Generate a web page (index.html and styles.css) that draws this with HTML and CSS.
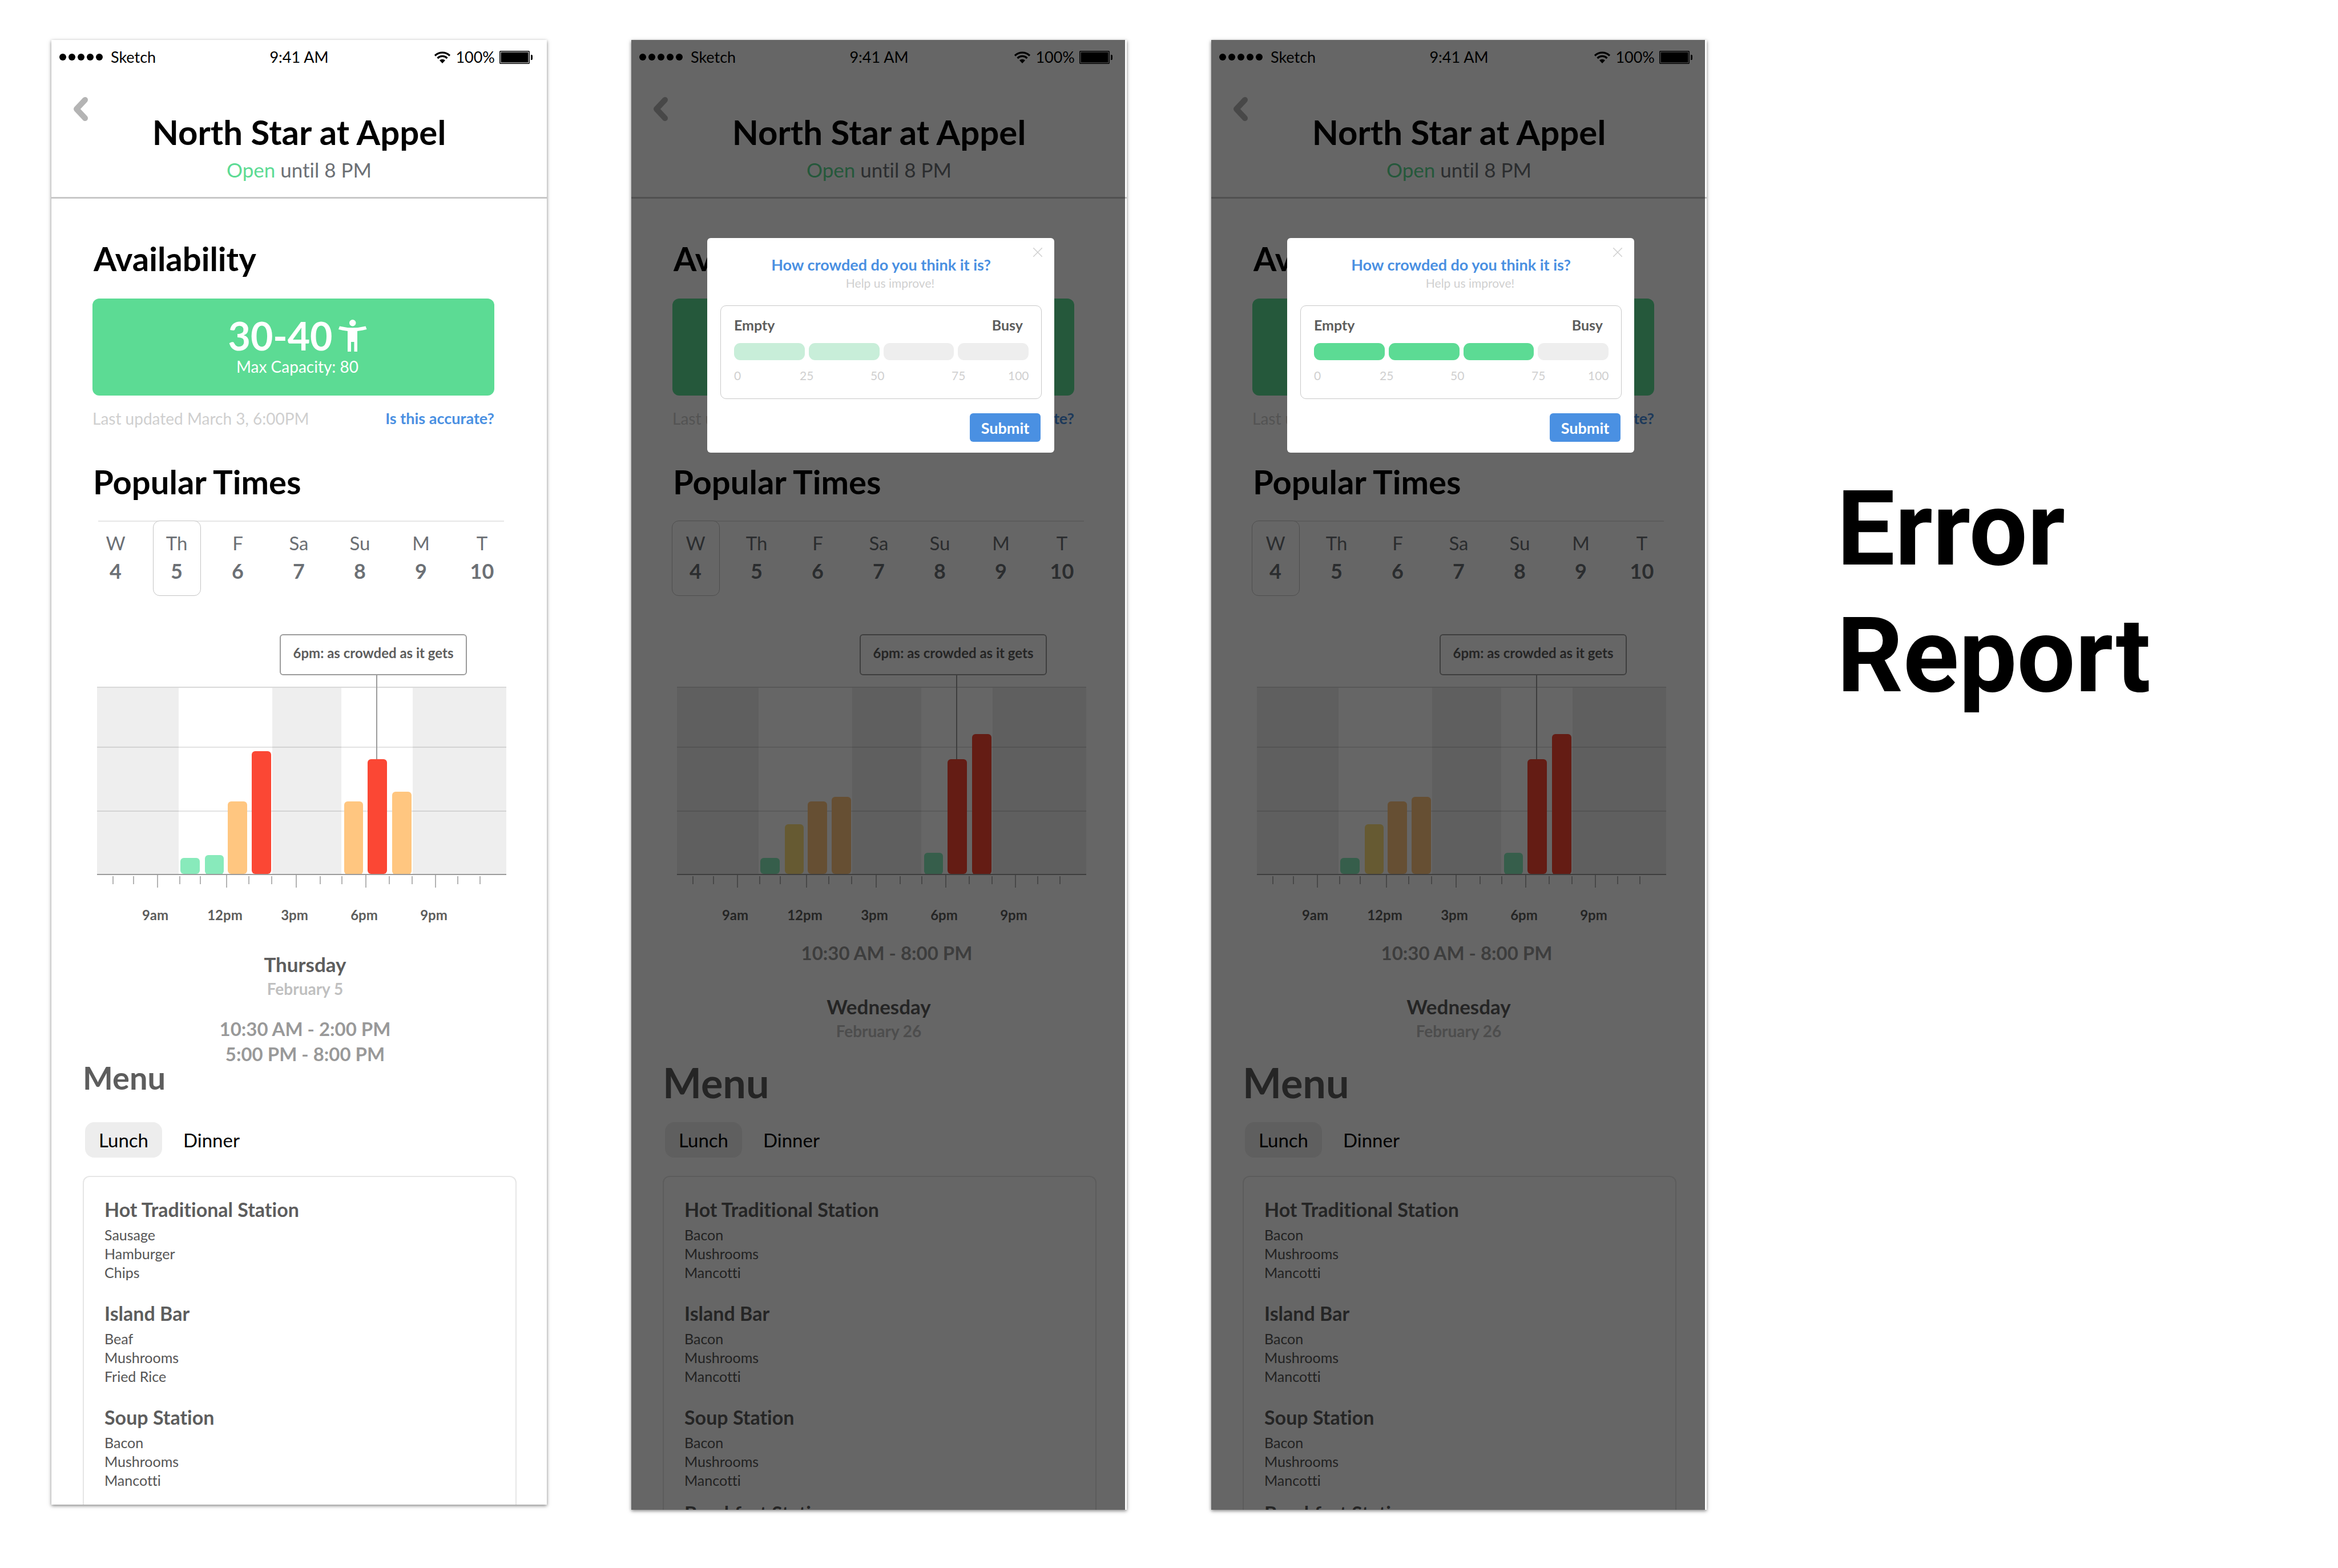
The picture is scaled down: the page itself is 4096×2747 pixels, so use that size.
FILE: index.html
```html
<!DOCTYPE html>
<html lang="en">
<head>
<meta charset="utf-8">
<title>Error Report</title>
<link rel="stylesheet" href="styles.css">
</head>
<body>
<svg class="sprite" aria-hidden="true">
  <symbol id="wifi" viewBox="0 0 30 21">
    <path d="M2 7.500a18.500 18.500 0 0 1 26 0M6.500 12a12 12 0 0 1 17 0" fill="none" stroke="#000" stroke-width="3.200"/>
    <path d="M15 21l-5-5.200a7.200 7.200 0 0 1 10 0z"/>
  </symbol>
  <symbol id="battery" viewBox="0 0 58 23">
    <rect x="0.750" y="0.750" width="51.500" height="21.500" rx="1" fill="none" stroke="#000" stroke-width="1.500"/>
    <rect x="2.500" y="2.500" width="48" height="18"/>
    <path d="M55 7h1.500q1.500 0 1.500 2v5q0 2-1.500 2H55z"/>
  </symbol>
  <symbol id="chevron" viewBox="0 0 27 42">
    <path d="M22 5L7 21l15 16" fill="none" stroke="#b4b4b4" stroke-width="10" stroke-linecap="round" stroke-linejoin="round"/>
  </symbol>
  <symbol id="person" viewBox="0 0 50 56">
    <circle cx="24.750" cy="5.750" r="5.750" fill="#fff"/>
    <path d="M0 17L2 11.500Q25 17 47.500 11.500L49.500 17Q42 19 33 20V56H27.500V39H22V56H16V20Q7 19 0 17Z" fill="#fff"/>
  </symbol>
  <symbol id="cross" viewBox="0 0 16 16">
    <path d="M0 0L16 16M16 0L0 16" stroke="#d0d0d0" stroke-width="1.500"/>
  </symbol>
  <symbol id="plot" viewBox="0 0 717 352">
    <path d="M0 0h143v329H0zM307 0h121v329H307zM553 0h164v329H553z" fill="#eee"/>
    <path d="M0 1h717" stroke="#d9d9d9" stroke-width="2"/>
    <path d="M0 106h717M0 218h717" stroke="#000" stroke-opacity=".11" stroke-width="2"/>
    <path d="M28 332v14M64 332v14M145 332v14M181 332v14M266 332v14M306 332v14M391 332v14M429 332v14M512 332v14M552 332v14M632 332v14M671 332v14M106 329v23M227 329v23M349 329v23M471 329v23M593 329v23" stroke="#9b9b9b" stroke-width="1.500"/>
  </symbol>
</svg>

<main class="board">
  <article class="phone">
    <header class="top">
      <div class="status">
        <span class="carrier"><i class="dot"></i><i class="dot"></i><i class="dot"></i><i class="dot"></i><i class="dot"></i><span class="carrier-name">Sketch</span></span>
        <span>9:41 AM</span>
        <span class="power"><svg class="wifi"><use href="#wifi"/></svg>100%<svg class="battery"><use href="#battery"/></svg></span>
      </div>
      <div class="nav">
        <button class="back" aria-label="Back"><svg class="chevron"><use href="#chevron"/></svg></button>
        <div class="place"><h1 class="title">North Star at Appel</h1><p class="open"><span class="open-now">Open</span> until 8 PM</p></div>
      </div>
    </header>
    <section class="availability">
      <h2 class="heading">Availability</h2>
      <div class="capacity">
        <p class="count">30-40<svg class="person"><use href="#person"/></svg></p>
        <p class="max">Max Capacity: 80</p>
      </div>
      <div class="updated"><span>Last updated March 3, 6:00PM</span><a class="accurate" href="#">Is this accurate?</a></div>
    </section>
    <section class="popular">
      <h2 class="heading">Popular Times</h2>
      <div class="days">
        <button class="day"><span>W</span><b class="date">4</b></button>
        <button class="day selected"><span>Th</span><b class="date">5</b></button>
        <button class="day"><span>F</span><b class="date">6</b></button>
        <button class="day"><span>Sa</span><b class="date">7</b></button>
        <button class="day"><span>Su</span><b class="date">8</b></button>
        <button class="day"><span>M</span><b class="date">9</b></button>
        <button class="day"><span>T</span><b class="date">10</b></button>
      </div>
      <div class="chart">
        <p class="tip">6pm: as crowded as it gets</p>
        <svg class="graph" viewBox="0 0 717 352">
          <use href="#plot"/>
          <path d="M490 -20V128" stroke="#9b9b9b" stroke-width="2"/>
          <g class="low"><rect x="146" y="300" width="34" height="28" rx="6"/><rect x="189" y="295" width="33" height="34" rx="6"/></g>
          <g class="high"><rect x="229" y="201" width="34" height="127" rx="6"/><rect x="433" y="201" width="33" height="128" rx="6"/><rect x="517" y="184" width="34" height="145" rx="6"/></g>
          <g class="full"><rect x="271" y="113" width="34" height="215" rx="6"/><rect x="474" y="127" width="34" height="201" rx="6"/></g>
          <path d="M0 329h717" stroke="#9b9b9b" stroke-width="2"/>
        </svg>
        <div class="hours-axis"><span>9am</span><span>12pm</span><span>3pm</span><span>6pm</span><span>9pm</span></div>
      </div>
      <div class="summary">
        <h3 class="weekday">Thursday</h3>
        <p class="calendar-date">February 5</p>
        <p class="hours">10:30 AM - 2:00 PM<br>5:00 PM - 8:00 PM</p>
      </div>
    </section>
    <section class="menu">
      <h2 class="menu-title">Menu</h2>
      <div class="meals"><button class="meal chosen">Lunch</button><button class="meal">Dinner</button></div>
      <div class="stations">
        <h3 class="station">Hot Traditional Station</h3>
        <ul class="dishes"><li>Sausage</li><li>Hamburger</li><li>Chips</li></ul>
        <h3 class="station">Island Bar</h3>
        <ul class="dishes"><li>Beaf</li><li>Mushrooms</li><li>Fried Rice</li></ul>
        <h3 class="station">Soup Station</h3>
        <ul class="dishes"><li>Bacon</li><li>Mushrooms</li><li>Mancotti</li></ul>
      </div>
    </section>
  </article>

  <article class="phone">
    <header class="top">
      <div class="status">
        <span class="carrier"><i class="dot"></i><i class="dot"></i><i class="dot"></i><i class="dot"></i><i class="dot"></i><span class="carrier-name">Sketch</span></span>
        <span>9:41 AM</span>
        <span class="power"><svg class="wifi"><use href="#wifi"/></svg>100%<svg class="battery"><use href="#battery"/></svg></span>
      </div>
      <div class="nav">
        <button class="back" aria-label="Back"><svg class="chevron"><use href="#chevron"/></svg></button>
        <div class="place"><h1 class="title">North Star at Appel</h1><p class="open"><span class="open-now">Open</span> until 8 PM</p></div>
      </div>
    </header>
    <section class="availability">
      <h2 class="heading">Availability</h2>
      <div class="capacity">
        <p class="count">30-40<svg class="person"><use href="#person"/></svg></p>
        <p class="max">Max Capacity: 80</p>
      </div>
      <div class="updated"><span>Last updated March 3, 6:00PM</span><a class="accurate" href="#">Is this accurate?</a></div>
    </section>
    <section class="popular">
      <h2 class="heading">Popular Times</h2>
      <div class="days">
        <button class="day selected"><span>W</span><b class="date">4</b></button>
        <button class="day"><span>Th</span><b class="date">5</b></button>
        <button class="day"><span>F</span><b class="date">6</b></button>
        <button class="day"><span>Sa</span><b class="date">7</b></button>
        <button class="day"><span>Su</span><b class="date">8</b></button>
        <button class="day"><span>M</span><b class="date">9</b></button>
        <button class="day"><span>T</span><b class="date">10</b></button>
      </div>
      <div class="chart">
        <p class="tip">6pm: as crowded as it gets</p>
        <svg class="graph" viewBox="0 0 717 352">
          <use href="#plot"/>
          <path d="M490 -20V128" stroke="#9b9b9b" stroke-width="2"/>
          <g class="low"><rect x="146" y="300" width="34" height="28" rx="6"/><rect x="433" y="291" width="33" height="38" rx="6"/></g>
          <g class="medium"><rect x="189" y="241" width="33" height="87" rx="6"/></g>
          <g class="high"><rect x="229" y="201" width="34" height="127" rx="6"/><rect x="271" y="193" width="34" height="135" rx="6"/></g>
          <g class="full"><rect x="474" y="127" width="34" height="201" rx="6"/><rect x="517" y="83" width="34" height="246" rx="6"/></g>
          <path d="M0 329h717" stroke="#9b9b9b" stroke-width="2"/>
        </svg>
        <div class="hours-axis"><span>9am</span><span>12pm</span><span>3pm</span><span>6pm</span><span>9pm</span></div>
      </div>
      <div class="summary hours-first">
        <p class="hours">10:30 AM - 8:00 PM</p>
        <h3 class="weekday">Wednesday</h3>
        <p class="calendar-date">February 26</p>
      </div>
    </section>
    <section class="menu">
      <h2 class="menu-title large">Menu</h2>
      <div class="meals"><button class="meal chosen">Lunch</button><button class="meal">Dinner</button></div>
      <div class="stations continued">
        <h3 class="station">Hot Traditional Station</h3>
        <ul class="dishes"><li>Bacon</li><li>Mushrooms</li><li>Mancotti</li></ul>
        <h3 class="station">Island Bar</h3>
        <ul class="dishes"><li>Bacon</li><li>Mushrooms</li><li>Mancotti</li></ul>
        <h3 class="station">Soup Station</h3>
        <ul class="dishes"><li>Bacon</li><li>Mushrooms</li><li>Mancotti</li></ul>
        <h3 class="station peek">Breakfast Station</h3>
      </div>
    </section>
    <div class="scrim"></div>
    <form class="dialog">
      <button class="close" type="button" aria-label="Close"><svg class="cross"><use href="#cross"/></svg></button>
      <h2 class="question">How crowded do you think it is?</h2>
      <p class="hint">Help us improve!</p>
      <div class="rating">
        <div class="ends"><span>Empty</span><span>Busy</span></div>
        <div class="levels pale">
          <input class="level on" type="radio" name="crowd-a" aria-label="0 to 25">
          <input class="level on" type="radio" name="crowd-a" aria-label="25 to 50" checked>
          <input class="level" type="radio" name="crowd-a" aria-label="50 to 75">
          <input class="level" type="radio" name="crowd-a" aria-label="75 to 100">
        </div>
        <div class="scale"><span>0</span><span>25</span><span>50</span><span>75</span><span>100</span></div>
      </div>
      <button class="submit" type="button">Submit</button>
    </form>
  </article>

  <article class="phone">
    <header class="top">
      <div class="status">
        <span class="carrier"><i class="dot"></i><i class="dot"></i><i class="dot"></i><i class="dot"></i><i class="dot"></i><span class="carrier-name">Sketch</span></span>
        <span>9:41 AM</span>
        <span class="power"><svg class="wifi"><use href="#wifi"/></svg>100%<svg class="battery"><use href="#battery"/></svg></span>
      </div>
      <div class="nav">
        <button class="back" aria-label="Back"><svg class="chevron"><use href="#chevron"/></svg></button>
        <div class="place"><h1 class="title">North Star at Appel</h1><p class="open"><span class="open-now">Open</span> until 8 PM</p></div>
      </div>
    </header>
    <section class="availability">
      <h2 class="heading">Availability</h2>
      <div class="capacity">
        <p class="count">30-40<svg class="person"><use href="#person"/></svg></p>
        <p class="max">Max Capacity: 80</p>
      </div>
      <div class="updated"><span>Last updated March 3, 6:00PM</span><a class="accurate" href="#">Is this accurate?</a></div>
    </section>
    <section class="popular">
      <h2 class="heading">Popular Times</h2>
      <div class="days">
        <button class="day selected"><span>W</span><b class="date">4</b></button>
        <button class="day"><span>Th</span><b class="date">5</b></button>
        <button class="day"><span>F</span><b class="date">6</b></button>
        <button class="day"><span>Sa</span><b class="date">7</b></button>
        <button class="day"><span>Su</span><b class="date">8</b></button>
        <button class="day"><span>M</span><b class="date">9</b></button>
        <button class="day"><span>T</span><b class="date">10</b></button>
      </div>
      <div class="chart">
        <p class="tip">6pm: as crowded as it gets</p>
        <svg class="graph" viewBox="0 0 717 352">
          <use href="#plot"/>
          <path d="M490 -20V128" stroke="#9b9b9b" stroke-width="2"/>
          <g class="low"><rect x="146" y="300" width="34" height="28" rx="6"/><rect x="433" y="291" width="33" height="38" rx="6"/></g>
          <g class="medium"><rect x="189" y="241" width="33" height="87" rx="6"/></g>
          <g class="high"><rect x="229" y="201" width="34" height="127" rx="6"/><rect x="271" y="193" width="34" height="135" rx="6"/></g>
          <g class="full"><rect x="474" y="127" width="34" height="201" rx="6"/><rect x="517" y="83" width="34" height="246" rx="6"/></g>
          <path d="M0 329h717" stroke="#9b9b9b" stroke-width="2"/>
        </svg>
        <div class="hours-axis"><span>9am</span><span>12pm</span><span>3pm</span><span>6pm</span><span>9pm</span></div>
      </div>
      <div class="summary hours-first">
        <p class="hours">10:30 AM - 8:00 PM</p>
        <h3 class="weekday">Wednesday</h3>
        <p class="calendar-date">February 26</p>
      </div>
    </section>
    <section class="menu">
      <h2 class="menu-title large">Menu</h2>
      <div class="meals"><button class="meal chosen">Lunch</button><button class="meal">Dinner</button></div>
      <div class="stations continued">
        <h3 class="station">Hot Traditional Station</h3>
        <ul class="dishes"><li>Bacon</li><li>Mushrooms</li><li>Mancotti</li></ul>
        <h3 class="station">Island Bar</h3>
        <ul class="dishes"><li>Bacon</li><li>Mushrooms</li><li>Mancotti</li></ul>
        <h3 class="station">Soup Station</h3>
        <ul class="dishes"><li>Bacon</li><li>Mushrooms</li><li>Mancotti</li></ul>
        <h3 class="station peek">Breakfast Station</h3>
      </div>
    </section>
    <div class="scrim"></div>
    <form class="dialog">
      <button class="close" type="button" aria-label="Close"><svg class="cross"><use href="#cross"/></svg></button>
      <h2 class="question">How crowded do you think it is?</h2>
      <p class="hint">Help us improve!</p>
      <div class="rating">
        <div class="ends"><span>Empty</span><span>Busy</span></div>
        <div class="levels">
          <input class="level on" type="radio" name="crowd-b" aria-label="0 to 25">
          <input class="level on" type="radio" name="crowd-b" aria-label="25 to 50">
          <input class="level on" type="radio" name="crowd-b" aria-label="50 to 75" checked>
          <input class="level" type="radio" name="crowd-b" aria-label="75 to 100">
        </div>
        <div class="scale"><span>0</span><span>25</span><span>50</span><span>75</span><span>100</span></div>
      </div>
      <button class="submit" type="button">Submit</button>
    </form>
  </article>

  <h1 class="caption">Error<br>Report</h1>
</main>
</body>
</html>
```
FILE: styles.css
```css
* { box-sizing: border-box; margin: 0; padding: 0; }
body { background: #fff; color: #000; font-family: Lato, "Open Sans", sans-serif; font-variant-ligatures: none; }
button { border: 0; background: none; font: inherit; color: inherit; }
svg { display: block; }
ul { list-style: none; }
.sprite { position: absolute; width: 0; height: 0; }

.board { display: grid; grid-template-columns: repeat(4, minmax(0, 1fr)); align-items: start; gap: 148px; padding: 70px 90px; }
.phone { position: relative; background: #fff; box-shadow: 0 2px 6px rgba(0, 0, 0, .5); }

/* Header */
.top { border-bottom: 3px solid #c8c8c8; }
.status { display: grid; grid-template-columns: 1fr auto 1fr; align-items: center; height: 60px; padding: 0 14px; font-size: 27px; line-height: 34px; }
.carrier { display: flex; align-items: center; gap: 4px; }
.dot { width: 12px; height: 12px; border-radius: 50%; background: #000; }
.carrier-name { padding-left: 10px; }
.power { display: flex; justify-content: flex-end; align-items: center; gap: 8px; padding-right: 11px; }
.wifi { width: 30px; height: 21px; }
.battery { width: 58px; height: 23px; }
.nav { display: grid; padding: 40px 0 26px; }
.back { grid-area: 1 / 1; justify-self: start; align-self: start; margin-left: 37px; }
.chevron { width: 27px; height: 42px; }
.place { grid-area: 1 / 1; padding-top: 28px; text-align: center; }
.title { font-size: 60px; line-height: 66px; font-weight: 700; }
.open { margin-top: 11px; font-size: 35px; line-height: 44px; color: #6c7075; }
.open-now { color: #5cdb94; }

/* Availability */
.availability { padding: 72px 92px 0 72px; }
.heading { padding-left: 2px; font-size: 58px; line-height: 66px; font-weight: 700; }
.capacity { display: flex; flex-direction: column; align-items: center; height: 170px; margin-top: 37px; padding: 28px 0 0 14px; border-radius: 12px; background: #5cdb94; color: #fff; }
.count { display: flex; align-items: center; gap: 10px; font-size: 68px; line-height: 74px; font-weight: 700; }
.person { width: 50px; height: 56px; }
.max { font-size: 28px; line-height: 34px; }
.updated { display: flex; justify-content: space-between; margin-top: 23px; font-size: 28px; line-height: 34px; color: #cfcfcf; }
.accurate { font-size: 27px; font-weight: 700; color: #4a90e2; text-decoration: none; }

/* Popular times */
.popular { padding: 61px 60px 0 59px; }
.popular .heading { padding-left: 14px; }
.days { display: grid; grid-template-columns: repeat(7, 1fr); justify-items: center; margin-top: 35px; background: linear-gradient(#e6e6e6, #e6e6e6) 23px 0 / calc(100% - 38px) 2px no-repeat; }
.day { display: flex; flex-direction: column; align-items: center; gap: 7px; width: 84px; height: 132px; padding-top: 18px; border: 1px solid transparent; border-radius: 12px; font-size: 33px; line-height: 40px; color: #6c7075; }
.selected { border-color: #c4c4c4; background: #fff; }
.date { font-size: 36px; line-height: 44px; font-weight: 700; }
.chart { padding: 67px 11px 0 21px; }
.tip { width: 328px; height: 72px; margin-left: 320px; border: 2px solid #9b9b9b; border-radius: 6px; font-size: 24px; line-height: 62px; font-weight: 700; text-align: center; color: #5d5d5d; }
.graph { width: 100%; margin-top: 20px; overflow: visible; }
.low { fill: #88eabb; }
.medium { fill: #ffe17d; }
.high { fill: #ffc680; }
.full { fill: #fb4734; }
.hours-axis { display: grid; grid-template-columns: repeat(5, 1fr); margin-top: 34px; padding: 0 66px 0 41px; font-size: 24px; line-height: 28px; font-weight: 700; text-align: center; color: #5d5d5d; }
.summary { padding: 52px 0 0 22px; text-align: center; }
.weekday { font-size: 35px; line-height: 40px; font-weight: 700; color: #5d5d5d; }
.calendar-date { margin-top: 6px; font-size: 28px; line-height: 34px; font-weight: 700; color: #c0c0c0; }
.hours { margin-top: 31px; font-size: 33px; line-height: 44px; font-weight: 700; color: #999; }
.hours-first { padding: 30px 0 0; }
.hours-first .hours { margin: 0 0 52px; padding-left: 28px; }

/* Menu */
.menu { padding: 0 53px 0 55px; }
.menu-title { font-size: 56px; line-height: 40px; font-weight: 700; color: #5d5d5d; }
.large { margin: 38px 0 -23px; font-size: 72px; line-height: 70px; }
.meals { display: flex; margin: 58px 0 32px 4px; font-size: 33px; line-height: 62px; }
.meal { padding: 0 24px; border-radius: 16px; }
.chosen { margin-right: 13px; background: #ededed; }
.stations { padding: 37px 36px 26px; border: 2px solid #e6e6e6; border-bottom: 0; border-radius: 12px 12px 0 0; color: #5d5d5d; }
.station { font-size: 34px; line-height: 40px; font-weight: 700; }
.dishes { margin: 8px 0 35px; font-size: 25px; line-height: 33px; color: #555; }
.dishes:last-of-type { margin-bottom: 0; }
.continued { padding-bottom: 0; }
.peek { height: 14px; margin-top: 21px; overflow: hidden; }

/* Crowd report dialog */
.scrim { position: absolute; inset: 0 3px 0 0; background: rgba(0, 0, 0, .6); }
.dialog { position: absolute; top: 347px; left: 133px; right: 127px; padding: 31px 22px 19px 23px; border-radius: 6px; background: #fff; text-align: center; }
.close { position: absolute; top: 17px; right: 21px; }
.cross { width: 16px; height: 16px; }
.question { font-size: 27px; line-height: 32px; font-weight: 700; color: #4a90e2; }
.hint { margin-top: 2px; padding-left: 32px; font-size: 21px; line-height: 28px; color: #d0d0d0; }
.rating { height: 164px; margin-top: 25px; padding: 17px 22px 0 23px; border: 1px solid #c8c8c8; border-radius: 10px; }
.ends { display: flex; justify-content: space-between; padding-right: 10px; font-size: 25px; line-height: 32px; font-weight: 700; color: #5d5d5d; }
.levels { display: grid; grid-template-columns: repeat(4, 1fr); gap: 7px; margin-top: 16px; }
.level { appearance: none; height: 30px; border-radius: 11px; background: #eee; }
.on { background: #5cdb94; }
.pale .on { background: #c8eed9; }
.scale { display: grid; grid-template-columns: 115px 124px 142px 99px auto; margin-top: 13px; font-size: 21px; line-height: 28px; text-align: left; color: #d0d0d0; }
.submit { display: block; width: 124px; height: 50px; margin: 25px 2px 0 auto; border-radius: 6px; background: #4a90e2; color: #fff; font-size: 27px; font-weight: 700; }

.caption { padding: 746px 0 0 80px; font-family: Roboto, "Open Sans", sans-serif; font-size: 181px; line-height: 222px; font-weight: 700; }
```
